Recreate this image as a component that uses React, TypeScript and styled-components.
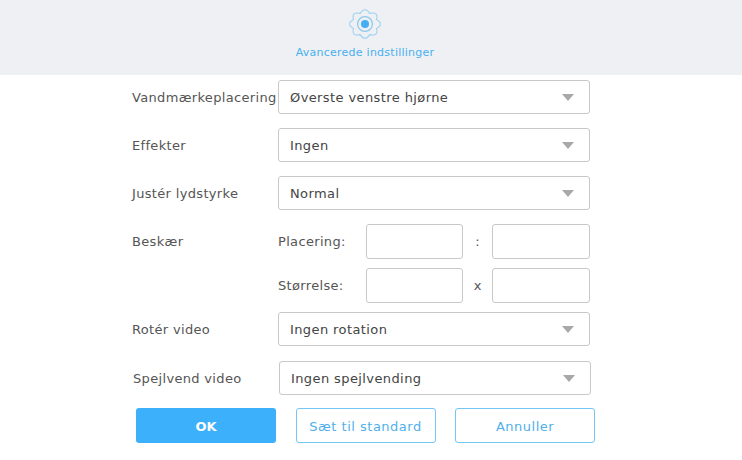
import React from 'react';
import styled, {createGlobalStyle} from "styled-components";

const Global = createGlobalStyle`
  html, body {
    margin: 0;
    padding: 0;
    background: #fff;
    font-family: "DejaVu Sans", Verdana, sans-serif;
  }
`

// scalloped outline of the gear, 8 lobes
const gearPath = () => {
    const point = (deg: number, r: number) => {
        const a = deg * Math.PI / 180
        return `${(16 + Math.sin(a) * r * 1.08).toFixed(2)} ${(15 - Math.cos(a) * r).toFixed(2)}`
    }
    let d = `M${point(-22.5, 11.5)}`
    for (let i = 0; i < 8; i++) {
        d += ` Q${point(i * 45, 18)} ${point(i * 45 + 22.5, 11.5)}`
    }
    return d + ' Z'
}

const GearIcon = () => (
    <svg width="32" height="30" viewBox="0 0 32 30" fill="none">
        <path d={gearPath()} stroke="#9ed2f1" strokeWidth="1.1" strokeLinejoin="round"/>
        <circle cx="16" cy="15" r="7.4" stroke="#8cc8ef" strokeWidth="1.2"/>
        <circle cx="16" cy="15" r="4" fill="#45aef2"/>
    </svg>
)

const Select = ({value}: { value: string }) => (
    <SelectBox>
        <span>{value}</span>
        <Arrow/>
    </SelectBox>
)

export default function App() {
    return (
        <Page>
            <Global/>
            <Header>
                <GearIcon/>
                <HeaderTitle>Avancerede indstillinger</HeaderTitle>
            </Header>
            <Form>
                <Row>
                    <Label>Vandmærkeplacering</Label>
                    <Select value="Øverste venstre hjørne"/>
                </Row>
                <Row>
                    <Label>Effekter</Label>
                    <Select value="Ingen"/>
                </Row>
                <Row>
                    <Label>Justér lydstyrke</Label>
                    <Select value="Normal"/>
                </Row>
                <CropRow>
                    <Label>Beskær</Label>
                    <CropGrid>
                        <SubLabel>Placering:</SubLabel>
                        <NumberBox/>
                        <Separator>:</Separator>
                        <NumberBox/>
                        <SubLabel>Størrelse:</SubLabel>
                        <NumberBox/>
                        <Separator>x</Separator>
                        <NumberBox/>
                    </CropGrid>
                </CropRow>
                <Row>
                    <Label>Rotér video</Label>
                    <Select value="Ingen rotation"/>
                </Row>
                <LastRow>
                    <Label>Spejlvend video</Label>
                    <Select value="Ingen spejlvending"/>
                </LastRow>
                <Buttons>
                    <PrimaryButton>OK</PrimaryButton>
                    <OutlineButton>Sæt til standard</OutlineButton>
                    <OutlineButton>Annuller</OutlineButton>
                </Buttons>
            </Form>
        </Page>
    );
};

const Page = styled.div`
  width: 742px;
  height: 460px;
  overflow: hidden;
  background: #fff;
`

const Header = styled.header`
  height: 75px;
  box-sizing: border-box;
  padding: 9px 12px 0 0;
  background-color: #eef0f4;
  display: flex;
  flex-direction: column;
  align-items: center;
`

const HeaderTitle = styled.div`
  margin-top: 6px;
  font-size: 11px;
  line-height: 16px;
  letter-spacing: 0.25px;
  color: #48b0f2;
`

const Form = styled.div`
  width: 470px;
  margin-left: 132px;
  padding-top: 5px;
`

const Row = styled.div`
  display: flex;
  align-items: flex-start;
  height: 34px;
  margin-bottom: 14px;
`

const LastRow = styled(Row)`
  margin: 15px 0 13px 1px;
`

const CropRow = styled.div`
  display: flex;
  align-items: flex-start;
  margin-bottom: 9px;
`

const Label = styled.div`
  width: 146px;
  flex-shrink: 0;
  font-size: 13px;
  line-height: 36px;
  letter-spacing: 0.33px;
  color: #555;
  white-space: nowrap;
`

const SelectBox = styled.div`
  width: 312px;
  height: 34px;
  flex-shrink: 0;
  box-sizing: border-box;
  padding: 0 15px 0 11px;
  display: flex;
  align-items: center;
  justify-content: space-between;
  background: #fff;
  border: 1px solid #c8c8c8;
  border-radius: 3px;
  font-size: 13px;
  letter-spacing: 0.4px;
  color: #444;
`

const Arrow = styled.i`
  width: 0;
  height: 0;
  border-left: 6px solid transparent;
  border-right: 6px solid transparent;
  border-top: 7px solid #a8a8a8;
`

const CropGrid = styled.div`
  display: grid;
  grid-template-columns: 88px 97px 29px 98px;
  grid-auto-rows: 35px;
  row-gap: 9px;
  align-items: center;
`

const SubLabel = styled.div`
  font-size: 13px;
  letter-spacing: 0.33px;
  color: #555;
`

const NumberBox = styled.div`
  height: 35px;
  box-sizing: border-box;
  border: 1px solid #c8c8c8;
  border-radius: 3px;
  background: #fff;
`

const Separator = styled.div`
  text-align: center;
  font-size: 13px;
  color: #555;
`

const Buttons = styled.div`
  display: flex;
  gap: 19.5px;
  margin-left: 4px;
`

const PrimaryButton = styled.button`
  width: 140px;
  height: 35px;
  flex-shrink: 0;
  padding: 1px 0 0;
  border: none;
  border-radius: 3px;
  background: #3cb0fb;
  color: #fff;
  font: bold 13px "DejaVu Sans", Verdana, sans-serif;
`

const OutlineButton = styled.button`
  width: 140px;
  height: 35px;
  flex-shrink: 0;
  padding: 1px 0 0;
  box-sizing: border-box;
  border: 1px solid #74c6f5;
  border-radius: 3px;
  background: #fff;
  color: #4fb0ec;
  font: 500 13px "DejaVu Sans", Verdana, sans-serif;
  letter-spacing: 0.5px;
`
